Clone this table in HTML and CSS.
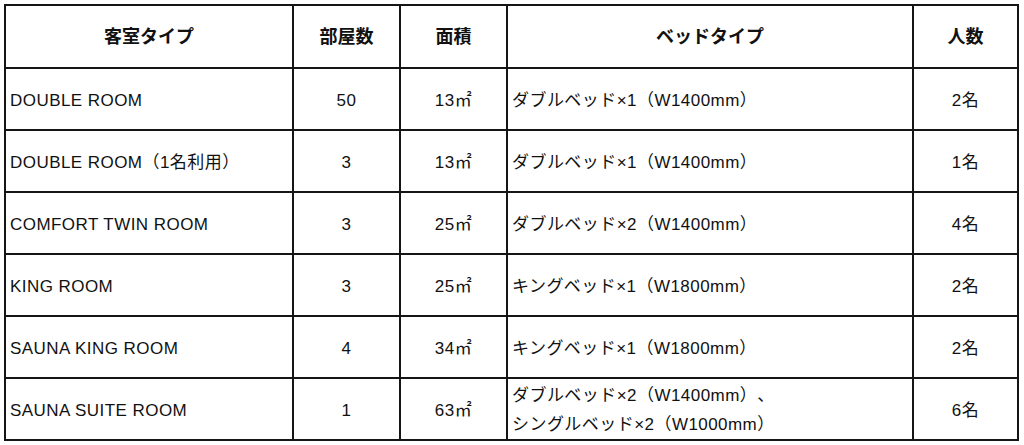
FILE: index.html
```html
<!DOCTYPE html>
<html lang="ja">
<head>
<meta charset="utf-8">
<link rel="stylesheet" href="styles.css">
</head>
<body>
<table class="rooms">
  <colgroup>
    <col class="c-type">
    <col class="c-num">
    <col class="c-area">
    <col class="c-bed">
    <col class="c-ppl">
  </colgroup>
  <thead>
    <tr class="head">
      <th>客室タイプ</th>
      <th>部屋数</th>
      <th>面積</th>
      <th>ベッドタイプ</th>
      <th>人数</th>
    </tr>
  </thead>
  <tbody>
    <tr>
      <td class="left">DOUBLE ROOM</td>
      <td class="mid">50</td>
      <td class="mid">13㎡</td>
      <td class="left">ダブルベッド×1（W1400mm）</td>
      <td class="mid">2名</td>
    </tr>
    <tr>
      <td class="left">DOUBLE ROOM（1名利用）</td>
      <td class="mid">3</td>
      <td class="mid">13㎡</td>
      <td class="left">ダブルベッド×1（W1400mm）</td>
      <td class="mid">1名</td>
    </tr>
    <tr>
      <td class="left">COMFORT TWIN ROOM</td>
      <td class="mid">3</td>
      <td class="mid">25㎡</td>
      <td class="left">ダブルベッド×2（W1400mm）</td>
      <td class="mid">4名</td>
    </tr>
    <tr>
      <td class="left">KING ROOM</td>
      <td class="mid">3</td>
      <td class="mid">25㎡</td>
      <td class="left">キングベッド×1（W1800mm）</td>
      <td class="mid">2名</td>
    </tr>
    <tr>
      <td class="left">SAUNA KING ROOM</td>
      <td class="mid">4</td>
      <td class="mid">34㎡</td>
      <td class="left">キングベッド×1（W1800mm）</td>
      <td class="mid">2名</td>
    </tr>
    <tr class="tall">
      <td class="left">SAUNA SUITE ROOM</td>
      <td class="mid">1</td>
      <td class="mid">63㎡</td>
      <td class="left multi">ダブルベッド×2（W1400mm）、<br>シングルベッド×2（W1000mm）</td>
      <td class="mid">6名</td>
    </tr>
  </tbody>
</table>
</body>
</html>
```

FILE: styles.css
```css
html, body {
  margin: 0;
  padding: 0;
  background: #ffffff;
}

body {
  padding: 4px 0 0 4px;
  font-family: "Liberation Sans", "Noto Sans CJK JP", sans-serif;
  color: #111111;
}

.rooms {
  border-collapse: collapse;
  width: 1013px;
  table-layout: fixed;
  font-size: 17px;
  letter-spacing: 0.45px;
  text-spacing-trim: space-all;
}

.c-type { width: 288px; }
.c-num { width: 107px; }
.c-area { width: 107px; }
.c-bed { width: 406px; }
.c-ppl { width: 105px; }

.rooms th,
.rooms td {
  border: 2px solid #151515;
  vertical-align: middle;
  line-height: 24px;
  padding: 0 4px;
}

.rooms td {
  padding-top: 3px;
}

.rooms tr {
  height: 62px;
}

.rooms tr.head {
  height: 63px;
}

.rooms th {
  font-weight: bold;
  text-align: center;
  font-size: 18px;
  letter-spacing: 0;
}

.left {
  text-align: left;
}

.mid {
  text-align: center;
}

.rooms td.multi {
  line-height: 29px;
  padding-top: 1px;
}
```
